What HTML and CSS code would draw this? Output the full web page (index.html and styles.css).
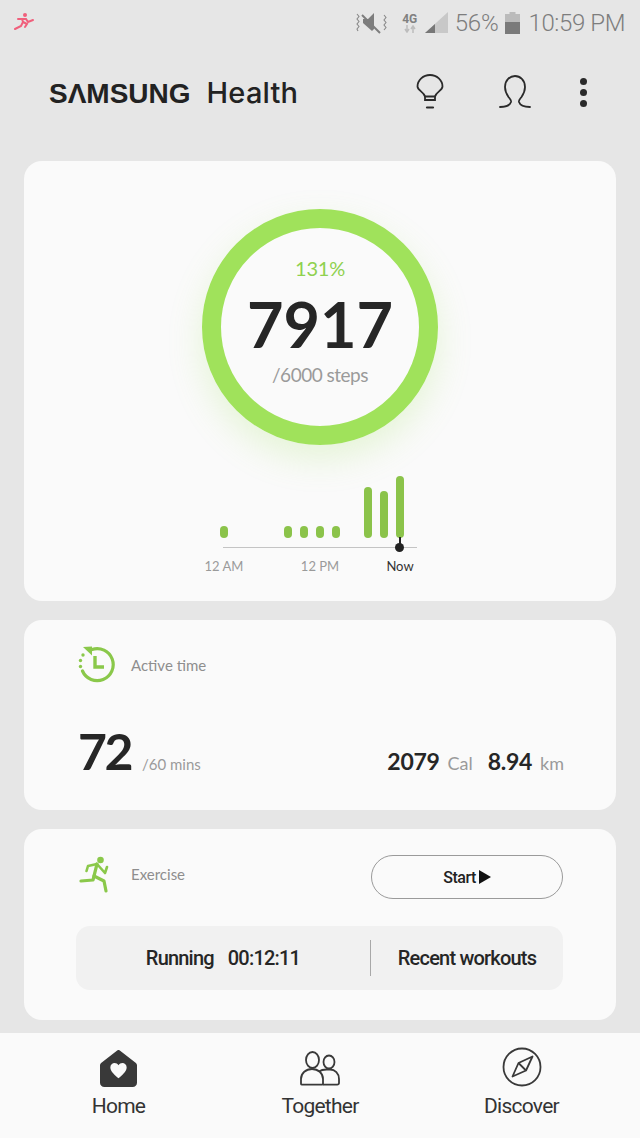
FILE: index.html
```html
<!DOCTYPE html>
<html lang="en">
<head>
<meta charset="utf-8">
<title>Samsung Health</title>
<link rel="stylesheet" href="styles.css">
</head>
<body>
<div class="screen">
  <div class="status">
    <svg class="notif" width="22" height="20" viewBox="0 0 22 20"><g fill="none" stroke="#f0607c" stroke-width="2" stroke-linecap="round"><path d="M1 18l6-3 2-4-1-3 4 0 2 3 5-2"/><path d="M9 11l4 2-2 3"/><path d="M7 8l-3 0"/></g><circle cx="11" cy="4" r="2" fill="#f0607c"/></svg>
    <div class="status-right">
      <svg width="32" height="22" viewBox="0 0 32 22"><g fill="none" stroke="#8a8a8a" stroke-width="1.100"><path d="M2 2l2 2.500-2 2.500 2 2.500-2 2.500 2 2.500-2 2.500 1 2"/><path d="M29 3l2 2.500-2 2.500 2 2.500-2 2.500 2 2.500-2 2.500"/></g><path d="M8 7h5l6-6v16l-2 2-9-8z" fill="#7d7d7d"/><path d="M7 3l18 18" stroke="#7d7d7d" stroke-width="2"/></svg>
      <div class="net"><span class="net-type">4G</span><svg width="16" height="8" viewBox="0 0 16 8"><path d="M5 0v6M3 4l2 3 2-3M11 8V2M9 4l2-3 2 3" fill="none" stroke="#bdbdbd" stroke-width="1.500"/></svg></div>
      <svg class="signal" width="23" height="24" viewBox="0 0 23 24"><path d="M0 22L23 1v21z" fill="#c8c8c8"/><path d="M0 22l10-9v9z" fill="#777"/></svg>
      <span class="pct">56%</span>
      <svg class="battery" width="15" height="22" viewBox="0 0 15 22"><rect x="4.500" y="0" width="6" height="2" fill="#bbb"/><rect x="0" y="2" width="15" height="20" fill="#bbb"/><rect x="0" y="10" width="15" height="12" fill="#7a7a7a"/></svg>
      <span class="clock">10:59 PM</span>
    </div>
  </div>

  <header class="topbar">
    <div class="brand"><span class="brand-samsung">SΛMSUNG</span><span class="brand-health">Health</span></div>
    <div class="actions">
      <svg width="28" height="36" viewBox="0 0 28 36" fill="none" stroke="#2a2a2a" stroke-width="1.800" stroke-linecap="round"><path d="M9 26v-3.500C8 18 1.500 16.500 1.500 12.500a12.500 11.500 0 0 1 25 0c0 4-6.500 5.500-7.500 10V26z"/><path d="M9 22.500h10"/><path d="M11 33.500h6" stroke-width="2.200"/></svg>
      <svg width="34" height="36" viewBox="0 0 34 36" fill="none" stroke="#2a2a2a" stroke-width="1.800" stroke-linecap="round"><path d="M2 33c6 0 10-2 11-5 .5-2-1-3-2.500-5C8.500 20 7 16 7 13 7 6 12 2 17 2s10 4 10 11c0 3-1.500 7-3.500 10-1.500 2-3 3-2.500 5 1 3 5 5 11 5"/></svg>
      <div class="kebab"><i></i><i></i><i></i></div>
    </div>
  </header>

  <main class="cards">
    <section class="card steps">
      <div class="ring">
        <div class="ring-pct">131%</div>
        <div class="ring-count">7917</div>
        <div class="ring-goal">/6000 steps</div>
      </div>
      <div class="chart">
        <div class="bars">
          <i class="bar" style="grid-column:1;height:12px"></i>
          <i class="bar" style="grid-column:5;height:12px"></i>
          <i class="bar" style="grid-column:6;height:12px"></i>
          <i class="bar" style="grid-column:7;height:12px"></i>
          <i class="bar" style="grid-column:8;height:12px"></i>
          <i class="bar" style="grid-column:10;height:51px"></i>
          <i class="bar" style="grid-column:11;height:47px"></i>
          <i class="bar" style="grid-column:12;height:62px"></i>
        </div>
        <div class="axis"><span class="now-mark"></span></div>
        <div class="ticks">
          <span class="tick t-am">12 AM</span>
          <span class="tick t-pm">12 PM</span>
          <span class="tick t-now">Now</span>
        </div>
      </div>
    </section>

    <section class="card active">
      <div class="card-head">
        <svg width="38" height="38" viewBox="0 0 38 38" fill="none"><path d="M14 3.500A16 16 0 1 1 4.500 25" stroke="#8ac84a" stroke-width="3.200" stroke-linecap="round"/><path d="M5 1l9-.5v9z" fill="#8ac84a"/><path d="M17 10v11h9" stroke="#8ac84a" stroke-width="3.400"/><circle cx="5" cy="9" r="1.700" fill="#8ac84a"/><circle cx="2.500" cy="14.500" r="1.700" fill="#8ac84a"/><circle cx="2.500" cy="20.500" r="1.700" fill="#8ac84a"/></svg>
        <span class="card-title">Active time</span>
      </div>
      <div class="active-stats">
        <div class="stat-main"><span class="big">72</span><span class="unit">/60 mins</span></div>
        <div class="stat-side"><b>2079</b><span class="unit">Cal</span><b class="km">8.94</b><span class="unit">km</span></div>
      </div>
    </section>

    <section class="card exercise">
      <div class="exercise-top">
        <div class="card-head">
          <svg width="38" height="38" viewBox="0 0 38 38"><circle cx="24.500" cy="5" r="3.300" fill="#8ac84a"/><g fill="none" stroke="#8ac84a" stroke-linecap="round" stroke-linejoin="round"><path d="M10.500 16l1.500-5 9-2 8 9 2-6" stroke-width="2.600"/><path d="M21 9l-4 16-12 1" stroke-width="3.200"/><path d="M18 21l10 5 2 10" stroke-width="3.200"/></g></svg>
          <span class="card-title">Exercise</span>
        </div>
        <button class="start">Start<svg width="12" height="14" viewBox="0 0 12 14"><path d="M0 0l12 7-12 7z" fill="#111"/></svg></button>
      </div>
      <div class="quick">
        <div class="quick-cell"><span>Running</span><span>00:12:11</span></div>
        <div class="quick-cell">Recent workouts</div>
      </div>
    </section>
  </main>

  <nav class="tabs">
    <div class="tab">
      <svg width="37" height="37" viewBox="3 3 34 34"><path d="M20 3a2 2 0 0 1 1.500.6L36 15a3 3 0 0 1 1 2.400V33a4 4 0 0 1-4 4H7a4 4 0 0 1-4-4V17.400A3 3 0 0 1 4 15L18.500 3.600A2 2 0 0 1 20 3z" fill="#393939"/><path d="M20 29c-3-3-7.500-6-7.500-10 0-4.500 5.500-5.500 7.500-2 2-3.500 7.500-2.500 7.500 2 0 4-4.500 7-7.500 10z" fill="#fafafa"/></svg>
      <span>Home</span>
    </div>
    <div class="tab">
      <svg width="42" height="37" viewBox="0 0 42 37" fill="none" stroke="#393939" stroke-width="1.800"><ellipse cx="13.500" cy="10" rx="6.500" ry="8"/><ellipse cx="30" cy="12" rx="5.500" ry="6.500"/><path d="M2 34v-5c0-6 5-10 11-10s11 4 11 10v5a1 1 0 0 1-1 .7H3a1 1 0 0 1-1-.7z"/><path d="M20 21.500c2-1.500 5-2 7.500-2H31c5 0 9 4 9 9.500v4a1.700 1.700 0 0 1-1.700 1.700H24"/></svg>
      <span>Together</span>
    </div>
    <div class="tab">
      <svg class="compass" width="40" height="40" viewBox="0 0 40 40" fill="none" stroke="#393939" stroke-width="1.800"><circle cx="20" cy="20" r="18.500"/><path d="M30.500 9.500L24 23.500 10.500 29.500 16.500 16z" stroke-linejoin="round"/><path d="M16.500 16l7.500 7.500"/></svg>
      <span>Discover</span>
    </div>
  </nav>
</div>
</body>
</html>
```

FILE: styles.css
```css
* { box-sizing: border-box; }

html, body { margin: 0; padding: 0; }

body {
  background: #e6e6e6;
  font-family: "Lato", "Liberation Sans", sans-serif;
  color: #262626;
}

.screen {
  width: 640px;
  height: 1138px;
  display: flex;
  flex-direction: column;
  overflow: hidden;
}

/* Status bar */
.status {
  height: 42px;
  padding: 11px 15px 0 14px;
  display: flex;
  justify-content: space-between;
  align-items: flex-start;
}

.status-right {
  display: flex;
  align-items: center;
  color: #7d7d7d;
  font-family: "Roboto", sans-serif;
  font-weight: 300;
  font-size: 24px;
  line-height: 22px;
}

.net {
  display: flex;
  flex-direction: column;
  align-items: center;
  margin-left: 13px;
  width: 20px;
}

.net-type {
  font-size: 12px;
  line-height: 12px;
  font-weight: 700;
  color: #808080;
}

.signal { margin-left: 5px; }
.pct { margin-left: 7px; letter-spacing: -0.2px; }
.battery { margin-left: 6px; }
.clock { margin-left: 9px; letter-spacing: -0.4px; }

/* App header */
.topbar {
  height: 100px;
  padding: 0 53px 0 49px;
  display: flex;
  justify-content: space-between;
  align-items: center;
}

.brand {
  display: flex;
  align-items: baseline;
  gap: 16px;
}

.brand-samsung {
  font-family: "Liberation Sans", sans-serif;
  font-weight: 700;
  font-size: 28px;
  color: #222;
}

.brand-health {
  font-family: "Inter", sans-serif;
  font-weight: 500;
  font-size: 29px;
  letter-spacing: 0.2px;
  color: #222;
}

.actions {
  display: flex;
  align-items: center;
  gap: 54px;
}

.actions .kebab { margin-left: -6px; }

.kebab {
  display: flex;
  flex-direction: column;
  gap: 4px;
}

.kebab i {
  width: 7px;
  height: 7px;
  border-radius: 50%;
  background: #2a2a2a;
}

/* Cards */
.cards {
  margin: 19px 24px 0;
  display: flex;
  flex-direction: column;
  gap: 19px;
  flex: 1;
}

.card {
  background: #fafafa;
  border-radius: 18px;
}

.steps {
  height: 440px;
  padding-top: 48px;
  display: flex;
  flex-direction: column;
  align-items: center;
}

.ring {
  width: 236px;
  height: 236px;
  border: 19px solid #a0e25b;
  border-radius: 50%;
  box-shadow: 0 14px 34px rgba(160, 226, 91, 0.22);
  display: flex;
  flex-direction: column;
  align-items: center;
}

.ring-pct {
  margin-top: 28px;
  font-size: 20px;
  line-height: 24px;
  letter-spacing: -0.2px;
  color: #8fd14f;
}

.ring-count {
  font-weight: 700;
  font-size: 63px;
  line-height: 60px;
  margin-top: 14px;
}

.ring-goal {
  margin-top: 9px;
  font-size: 19px;
  line-height: 24px;
  letter-spacing: -0.5px;
  color: #9a9a9a;
  white-space: nowrap;
}

/* Hourly step chart */
.chart {
  margin-top: 31px;
  width: 208px;
}

.bars,
.ticks {
  display: grid;
  grid-template-columns: repeat(12, 16px);
}

.bars {
  height: 62px;
  align-items: end;
  grid-auto-flow: column;
}

.bar {
  grid-row: 1;
  justify-self: center;
  display: block;
  width: 8px;
  border-radius: 4px;
  background: #8bc34a;
}

.axis {
  position: relative;
  margin: 9px 0 0 7px;
  width: 194px;
  height: 1px;
  background: #c4c4c4;
}

.now-mark {
  position: absolute;
  left: 172px;
  top: -4px;
  width: 9px;
  height: 9px;
  border-radius: 50%;
  background: #222;
}

.now-mark::before {
  content: "";
  position: absolute;
  left: 3.5px;
  top: -6px;
  width: 2px;
  height: 8px;
  background: #222;
}

.ticks {
  margin-top: 10px;
  font-size: 13px;
  line-height: 17px;
  color: #9a9a9a;
}

.tick {
  display: flex;
  justify-content: center;
  white-space: nowrap;
  grid-row: 1;
}

.t-am { grid-column: 1; }
.t-pm { grid-column: 7; }
.t-now { grid-column: 12; color: #333; }

/* Active time */
.active {
  height: 190px;
  padding: 26px 52px 0 54px;
}

.card-head {
  display: flex;
  align-items: center;
  gap: 15px;
}

.card-title {
  font-size: 15px;
  color: #8e8e8e;
}

.active-stats {
  margin-top: 38px;
  display: flex;
  justify-content: space-between;
  align-items: baseline;
}

.big {
  font-weight: 700;
  font-size: 50px;
  line-height: 58px;
  letter-spacing: -2.5px;
}

.unit {
  font-size: 15px;
  color: #9a9a9a;
}

.stat-main .unit { margin-left: 11px; }

.stat-side b {
  font-weight: 700;
  font-size: 23px;
  letter-spacing: -0.3px;
}

.stat-side .unit {
  font-size: 18px;
  margin-left: 8px;
}

.stat-side .km { margin-left: 15px; }

/* Exercise */
.exercise {
  height: 191px;
  padding: 26px 53px 0 52px;
}

.exercise-top {
  display: flex;
  justify-content: space-between;
  align-items: flex-start;
}

.exercise .card-head { gap: 17px; }

.start {
  width: 192px;
  height: 44px;
  border: 1px solid #9a9a9a;
  border-radius: 22px;
  background: transparent;
  display: flex;
  justify-content: center;
  align-items: center;
  gap: 3px;
  font-family: "Roboto", sans-serif;
  font-weight: 500;
  font-size: 16px;
  letter-spacing: -0.5px;
  color: #222;
}

.quick {
  margin-top: 27px;
  height: 64px;
  border-radius: 14px;
  background: #f1f1f1;
  display: grid;
  grid-template-columns: 294px 1fr;
  align-items: center;
}

.quick-cell {
  display: flex;
  justify-content: center;
  gap: 14px;
  font-family: "Roboto", sans-serif;
  font-weight: 500;
  font-size: 20px;
  letter-spacing: -0.8px;
  line-height: 36px;
  color: #262626;
}

.quick-cell + .quick-cell {
  border-left: 1px solid #a8a8a8;
}

/* Bottom navigation */
.tabs {
  height: 105px;
  padding-top: 17px;
  background: #fafafa;
  display: grid;
  grid-template-columns: 237px 166px 237px;
}

.tab {
  display: flex;
  flex-direction: column;
  align-items: center;
  font-family: "Roboto", sans-serif;
  font-size: 21px;
  line-height: 28px;
  letter-spacing: -0.75px;
  color: #333;
}

.tab svg { margin-bottom: 5px; }

.tab .compass {
  margin-top: -3px;
  margin-bottom: 5px;
}
```
